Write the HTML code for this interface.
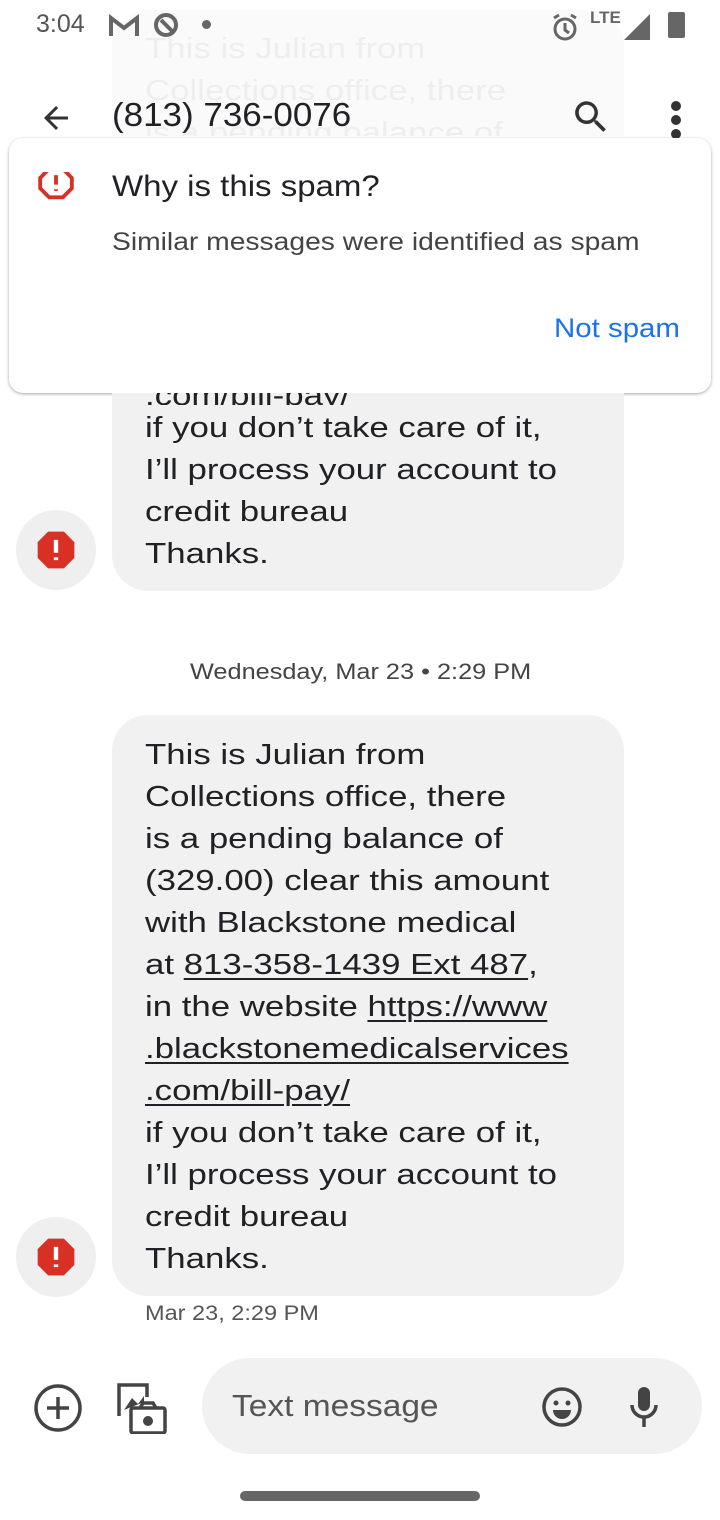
<!DOCTYPE html>
<html><head><meta charset="utf-8"><style>
*{margin:0;padding:0;box-sizing:border-box}
body{width:720px;height:1520px;background:#fff;position:relative;overflow:hidden;font-family:"Liberation Sans",sans-serif;color:#202124}
.abs{position:absolute}
.sx{display:inline-block;transform-origin:0 0;white-space:nowrap}
.bubble{position:absolute;left:112px;width:512px;background:#f1f1f1;border-radius:36px;padding:20px 0 0 33px;font-size:29px;line-height:42px;color:#202124}
.bubble .sx{transform:scaleX(1.2)}
.bubble u{text-decoration-thickness:2px;text-underline-offset:4px}
.spamic{position:absolute;left:16px;width:80px;height:80px;border-radius:50%;background:#efefef}
</style></head><body>
<div class="abs" style="left:112px;top:10px;width:512px;height:126px;background:#fafafa;border-radius:36px 36px 0 0;padding:18px 0 0 33px;font-size:29px;line-height:42px;color:#eeeeee;overflow:hidden"><span class="sx" style="transform:scaleX(1.2)">This is Julian from<br>Collections office, there<br>is a pending balance of</span></div>
<div class="abs" style="left:36px;top:10px;font-size:25px;color:#555">3:04</div>
<svg class="abs" style="left:108px;top:14px" width="32" height="24" viewBox="0 0 32 24"><path d="M3 22V4l13 10 13-10v18" fill="none" stroke="#666" stroke-width="4"/></svg>
<svg class="abs" style="left:152px;top:11px" width="30" height="30" viewBox="0 0 30 30"><circle cx="14" cy="14" r="10" fill="none" stroke="#666" stroke-width="4"/><path d="M9 9l13 13" stroke="#666" stroke-width="4"/></svg>
<div class="abs" style="left:202px;top:20px;width:9px;height:9px;border-radius:50%;background:#666"></div>
<svg class="abs" style="left:550px;top:12px" width="30" height="30" viewBox="0 0 30 30"><circle cx="15" cy="17" r="10" fill="none" stroke="#666" stroke-width="3"/><path d="M15 11v7l4 3M4 6l5-3M26 6l-5-3" stroke="#666" stroke-width="3" fill="none"/></svg>
<div class="abs" style="left:590px;top:8px;font-size:17px;font-weight:bold;color:#666">LTE</div>
<svg class="abs" style="left:624px;top:14px" width="26" height="26"><path d="M26 0V26H0z" fill="#666"/></svg>
<div class="abs" style="left:668px;top:12px;width:17px;height:26px;background:#666;border-radius:2px"></div>
<svg class="abs" style="left:38px;top:100px" width="36" height="36" viewBox="0 0 24 24"><path d="M20 11H7.8l5.6-5.6L12 4l-8 8 8 8 1.4-1.4L7.8 13H20z" fill="#333"/></svg>
<div class="abs" style="left:112px;top:96px;font-size:33px;color:#202124"><span class="sx" style="transform:scaleX(1.06)">(813) 736-0076</span></div>
<svg class="abs" style="left:570px;top:96px" width="42" height="42" viewBox="0 0 24 24"><path d="M15.5 14h-.8l-.3-.3A6.5 6.5 0 1 0 9.5 16a6.5 6.5 0 0 0 4.2-1.6l.3.3v.8l5 5 1.5-1.5zm-6 0a4.5 4.5 0 1 1 0-9 4.5 4.5 0 0 1 0 9z" fill="#333"/></svg>
<div class="abs" style="left:671px;top:101px;width:10px;height:10px;border-radius:50%;background:#333;box-shadow:0 14px 0 #333,0 28px 0 #333"></div>
<div class="abs" style="left:9px;top:138px;width:702px;height:255px;background:#fff;border-radius:14px;box-shadow:0 1px 3px rgba(0,0,0,.35)"></div>
<svg class="abs" style="left:37px;top:172px" width="38" height="38" viewBox="0 0 24 24"><path d="M7.7 2h8.6L22 7.7v6.6L16.3 20H7.7L2 14.3V7.7z" fill="none" stroke="#d93025" stroke-width="2.4" transform="translate(0,-4)"/><path d="M12 2v6M12 11v1" stroke="#d93025" stroke-width="2.4"/></svg>
<div class="abs" style="left:112px;top:170px;font-size:30px;color:#202124"><span class="sx" style="transform:scaleX(1.1)">Why is this spam?</span></div>
<div class="abs" style="left:112px;top:228px;font-size:25px;color:#444"><span class="sx" style="transform:scaleX(1.13)">Similar messages were identified as spam</span></div>
<div class="abs" style="left:554px;top:313px;font-size:27px;color:#1a73e8"><span class="sx" style="transform:scaleX(1.09)">Not spam</span></div>
<div class="bubble" style="top:393px;height:198px;border-radius:0 0 36px 36px;padding-top:0">
<div style="height:12px;overflow:hidden;line-height:6px"><span class="sx"><u>.com/bill-pay/</u></span></div>
<span class="sx" style="margin-top:2px">if you don’t take care of it,<br>I’ll process your account to<br>credit bureau<br>Thanks.</span></div>
<div class="spamic" style="top:510px"></div>
<svg class="abs" style="left:34px;top:528px" width="44" height="44" viewBox="0 0 24 24"><path d="M7.7 2h8.6L22 7.7v8.6L16.3 22H7.7L2 16.3V7.7z" fill="#d93025"/><path d="M12 6.5v7M12 16v1.5" stroke="#fff" stroke-width="2.4"/></svg>
<div class="abs" style="left:190px;top:659px;font-size:22px;color:#444"><span class="sx" style="transform:scaleX(1.15)">Wednesday, Mar 23 • 2:29 PM</span></div>
<div class="bubble" style="top:715px;height:581px;padding-top:19px"><span class="sx">This is Julian from<br>Collections office, there<br>is a pending balance of<br>(329.00) clear this amount<br>with Blackstone medical<br>at <u>813-358-1439 Ext 487</u>,<br>in the website <u>https://www</u><br><u>.blackstonemedicalservices</u><br><u>.com/bill-pay/</u><br>if you don’t take care of it,<br>I’ll process your account to<br>credit bureau<br>Thanks.</span></div>
<div class="spamic" style="top:1217px"></div>
<svg class="abs" style="left:34px;top:1235px" width="44" height="44" viewBox="0 0 24 24"><path d="M7.7 2h8.6L22 7.7v8.6L16.3 22H7.7L2 16.3V7.7z" fill="#d93025"/><path d="M12 6.5v7M12 16v1.5" stroke="#fff" stroke-width="2.4"/></svg>
<div class="abs" style="left:145px;top:1302px;font-size:21px;color:#555"><span class="sx" style="transform:scaleX(1.12)">Mar 23, 2:29 PM</span></div>
<svg class="abs" style="left:33px;top:1383px" width="50" height="50" viewBox="0 0 50 50"><circle cx="25" cy="25" r="22" fill="none" stroke="#444" stroke-width="3.5"/><path d="M25 14v22M14 25h22" stroke="#444" stroke-width="3.5"/></svg>
<svg class="abs" style="left:116px;top:1382px" width="52" height="52" viewBox="0 0 52 52"><path d="M3 34V3h28v12" fill="none" stroke="#444" stroke-width="3.5"/><path d="M8 28l8-12 6 6 6-8v6" fill="#444"/><rect x="15" y="26" width="34" height="25" rx="2" fill="none" stroke="#444" stroke-width="3.5"/><circle cx="32" cy="39" r="5" fill="#444"/><path d="M24 26l3-5h10l3 5" fill="none" stroke="#444" stroke-width="3.5"/></svg>
<div class="abs" style="left:202px;top:1358px;width:500px;height:96px;border-radius:48px;background:#f1f1f1"></div>
<div class="abs" style="left:232px;top:1388px;font-size:31px;color:#555"><span class="sx" style="transform:scaleX(1.08)">Text message</span></div>
<svg class="abs" style="left:540px;top:1385px" width="44" height="44" viewBox="0 0 44 44"><circle cx="22" cy="22" r="18" fill="none" stroke="#444" stroke-width="3.5"/><circle cx="16" cy="18" r="2.5" fill="#444"/><circle cx="28" cy="18" r="2.5" fill="#444"/><path d="M13 25h18a9 9 0 0 1-18 0z" fill="#444"/></svg>
<svg class="abs" style="left:628px;top:1385px" width="32" height="44" viewBox="0 0 32 44"><rect x="10" y="2" width="12" height="24" rx="6" fill="#444"/><path d="M4 20a12 12 0 0 0 24 0M16 32v10" fill="none" stroke="#444" stroke-width="3.5"/></svg>
<div class="abs" style="left:240px;top:1491px;width:240px;height:10px;border-radius:5px;background:#666"></div>
</body></html>
